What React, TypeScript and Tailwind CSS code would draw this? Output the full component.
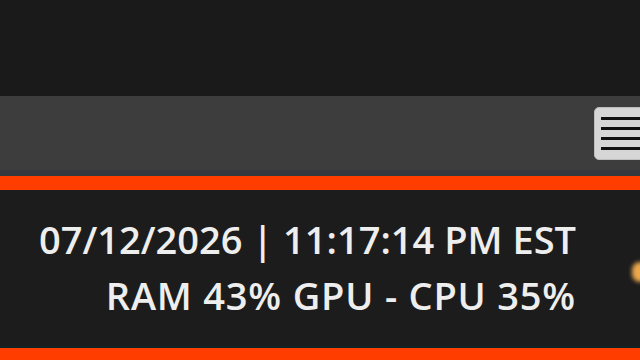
const App = () => {
  return (
    <div className="flex h-[360px] w-[640px] flex-col overflow-hidden bg-[#1a1a1a]" style={{ fontFamily: '"Open Sans", "Noto Sans", sans-serif' }}>
      {/* Top empty area */}
      <div className="h-[96px] shrink-0 bg-[#1a1a1a]" />

      {/* Toolbar */}
      <div className="flex h-[74px] shrink-0 items-center justify-end bg-[#3d3d3d]">
        <div className="mr-[-14px] flex h-[53px] w-[60px] flex-col justify-center gap-[7px] rounded-[5px] border border-[#bdbdbd] bg-[#d6d6d6] pl-[6px]">
          {[0, 1, 2, 3].map((i) => (
            <div key={i} className="h-[3px] w-full bg-[#111]" />
          ))}
        </div>
      </div>
      <div className="h-[6px] shrink-0 bg-[#35383c]" />
      <div className="h-[14px] shrink-0 bg-[#ff3d00]" />

      {/* Status */}
      <div className="relative flex flex-1 flex-col items-end justify-center bg-[#1c1c1c] pr-[64px] pb-[2px] text-[38px] font-semibold leading-[56px] text-[#eeeeee]">
        <div>07/12/2026 | 11:17:14 PM EST</div>
        <div className="tracking-[0.8px]">RAM 43% GPU - CPU 35%</div>
        <div className="absolute right-[-8px] top-[72px] h-[20px] w-[16px] rounded-full bg-[#eba84c] blur-[2px]" />
      </div>

      <div className="h-[2px] shrink-0 bg-[#0f2426]" />
      <div className="h-[12px] shrink-0 bg-[#ff3d00]" />
    </div>
  );
};

export default App;
